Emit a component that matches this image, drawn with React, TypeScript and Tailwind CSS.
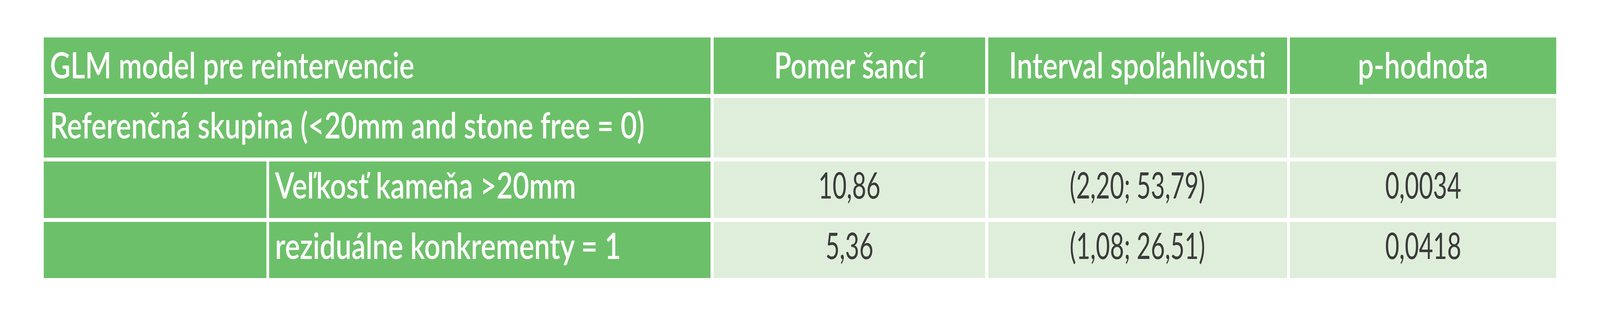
import { useEffect, useState } from "react";

// the table was laid out for a 5619px wide page; text is squeezed sideways
// when the window is narrower so the columns keep their proportions
const DESIGN_WIDTH = 5619;

const rows = [
  { label: "Veľkosť kameňa >20mm", ratio: "10,86", interval: "(2,20; 53,79)", p: "0,0034" },
  { label: "reziduálne konkrementy = 1", ratio: "5,36", interval: "(1,08; 26,51)", p: "0,0418" },
];

function useSqueeze() {
  const [k, setK] = useState(() => Math.min(1, window.innerWidth / DESIGN_WIDTH));
  useEffect(() => {
    const onResize = () => setK(Math.min(1, window.innerWidth / DESIGN_WIDTH));
    window.addEventListener("resize", onResize);
    return () => window.removeEventListener("resize", onResize);
  }, []);
  return k;
}

export default function App() {
  const k = useSqueeze();
  const head = { transform: `scaleX(${1.065 * k})` };
  const val = { transform: `scaleX(${0.92 * k})` };

  return (
    <div className="w-full h-[800px] bg-white px-[2.74%] pt-[96px] font-['Lato','Open_Sans',sans-serif] text-[93px] leading-none whitespace-nowrap">
      <div className="grid grid-cols-[minmax(0,781fr)_minmax(0,1551fr)_minmax(0,954fr)_minmax(0,1050fr)_minmax(0,935fr)] grid-rows-[145px_153px_145px_144px] gap-x-[0.19%] gap-y-[10px]">
        {/* Header */}
        <div className="col-span-2 bg-[#6dc06a] text-white font-semibold flex items-center pl-[0.9%] pb-[6px] overflow-visible">
          <span className="inline-block origin-left" style={head}>GLM model pre reintervencie</span>
        </div>
        <div className="bg-[#6dc06a] text-white font-semibold flex items-center justify-center pb-[6px]">
          <span className="inline-block" style={head}>Pomer šancí</span>
        </div>
        <div className="bg-[#6dc06a] text-white font-semibold flex items-center justify-center pb-[6px]">
          <span className="inline-block" style={head}>Interval spoľahlivosti</span>
        </div>
        <div className="bg-[#6dc06a] text-white font-semibold flex items-center justify-center pb-[6px]">
          <span className="inline-block" style={head}>p-hodnota</span>
        </div>

        {/* Reference group */}
        <div className="col-span-2 bg-[#6dc06a] text-white font-semibold flex items-center pl-[0.9%] pb-[17px]">
          <span className="inline-block origin-left" style={head}>Referenčná skupina (&lt;20mm and stone free = 0)</span>
        </div>
        <div className="bg-[#dfeeda]" />
        <div className="bg-[#dfeeda]" />
        <div className="bg-[#dfeeda]" />

        {rows.map((r) => [
          <div key={r.label + "a"} className="bg-[#6dc06a]" />,
          <div key={r.label + "b"} className="bg-[#6dc06a] text-white font-semibold flex items-center pl-[1.3%] pb-[26px]">
            <span className="inline-block origin-left" style={head}>{r.label}</span>
          </div>,
          <div key={r.label + "c"} className="bg-[#dfeeda] text-[#3b3b3b] flex items-center justify-center pb-[26px]">
            <span className="inline-block" style={val}>{r.ratio}</span>
          </div>,
          <div key={r.label + "d"} className="bg-[#dfeeda] text-[#3b3b3b] flex items-center justify-center pb-[26px]">
            <span className="inline-block" style={val}>{r.interval}</span>
          </div>,
          <div key={r.label + "e"} className="bg-[#dfeeda] text-[#3b3b3b] flex items-center justify-center pb-[26px]">
            <span className="inline-block" style={val}>{r.p}</span>
          </div>,
        ])}
      </div>
    </div>
  );
}
